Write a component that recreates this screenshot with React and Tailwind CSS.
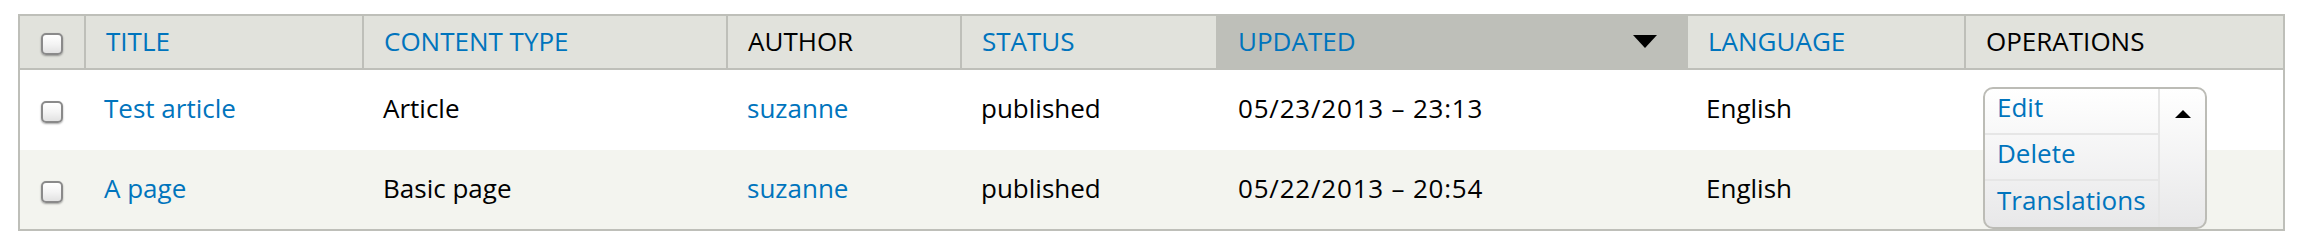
import React from 'react';

// Column widths (px) incl. the 2px left divider of each header cell
const cols = [
  { key: 'check', w: 'w-[64px]' },
  { key: 'title', w: 'w-[278px]', label: 'TITLE', link: true },
  { key: 'type', w: 'w-[364px]', label: 'CONTENT TYPE', link: true },
  { key: 'author', w: 'w-[234px]', label: 'AUTHOR' },
  { key: 'status', w: 'w-[256px]', label: 'STATUS', link: true },
  { key: 'updated', w: 'w-[470px]', label: 'UPDATED', link: true, active: true },
  { key: 'lang', w: 'w-[278px]', label: 'LANGUAGE', link: true },
  { key: 'ops', w: 'w-[319px]', label: 'OPERATIONS' },
];

const rows = [
  { title: 'Test article', type: 'Article', author: 'suzanne', status: 'published', updated: '05/23/2013 \u2013 23:13', lang: 'English', ops: true },
  { title: 'A page', type: 'Basic page', author: 'suzanne', status: 'published', updated: '05/22/2013 \u2013 20:54', lang: 'English' },
];

const Checkbox = () => (
  <span className="mt-[4px] block w-[22px] h-[22px] rounded-[5px] border-2 border-[#8a8a8a] bg-gradient-to-b from-white via-[#f4f4f4] to-[#e2e2e2] shadow-[0_1px_2px_rgba(0,0,0,0.35)]" />
);

const DropButton = () => (
  <div className="absolute left-[19px] top-[17px] w-[224px] flex rounded-[10px] border-2 border-[#bcbcb6] bg-gradient-to-b from-white to-[#e8e8e9] overflow-hidden z-10">
    <ul className="w-[173px] flex flex-col">
      <li className="h-[46px] flex items-center pl-[12px] pb-[7px] border-b-2 border-[#e6e6e6]">
        <a className="text-[#0074bd]">Edit</a>
      </li>
      <li className="h-[46px] flex items-center pl-[12px] pb-[7px] border-b-2 border-[#e6e6e6]">
        <a className="text-[#0074bd]">Delete</a>
      </li>
      <li className="h-[46px] flex items-center pl-[12px] pb-[7px]">
        <a className="text-[#0074bd]">Translations</a>
      </li>
    </ul>
    <div className="flex-1 border-l-2 border-[#e6e6e6] flex justify-center pt-[21px]">
      <svg width="16" height="8" viewBox="0 0 16 8">
        <polygon points="0,8 16,8 8,0" fill="#000" />
      </svg>
    </div>
  </div>
);

export default function App() {
  return (
    <div className="bg-white w-[2308px] h-[246px] pt-[14px] pl-[18px] text-[26px] text-black" style={{ fontFamily: '"Open Sans", "Noto Sans", sans-serif' }}>
      <div className="w-[2267px] border-2 border-[#bebfb9]">
        {/* header */}
        <div className="flex h-[54px] bg-[#e1e2dc] border-b-2 border-[#bebfb9]">
          {cols.map((c, i) => (
            <div
              key={c.key}
              className={`${c.w} flex items-center ${i === 0 ? 'justify-center' : 'border-l-2 pl-[20px] pb-[2px]'} ${
                c.active ? 'bg-[#bebfb9] border-[#bebfb9] pr-[29px] justify-between' : 'border-[#bebfb9]'
              }`}
            >
              {i === 0 ? (
                <Checkbox />
              ) : (
                <span className={c.link ? 'text-[#0074bd]' : 'text-black'}>{c.label}</span>
              )}
              {c.active && (
                <svg width="24" height="13" viewBox="0 0 24 13">
                  <polygon points="0,0 24,0 12,13" fill="#000" />
                </svg>
              )}
            </div>
          ))}
        </div>
        {/* rows */}
        {rows.map((r, ri) => (
          <div key={ri} className={`flex ${ri === 0 ? 'h-[80px] bg-white' : 'h-[79px] bg-[#f3f4ef]'}`}>
            <div className="w-[64px] flex items-center justify-center">
              <Checkbox />
            </div>
            <div className="w-[278px] flex items-center pl-[20px] pb-[3px]">
              <a className="text-[#0074bd]">{r.title}</a>
            </div>
            <div className="w-[364px] flex items-center pl-[21px] pb-[3px]">{r.type}</div>
            <div className="w-[234px] flex items-center pl-[21px] pb-[3px]">
              <a className="text-[#0074bd]">{r.author}</a>
            </div>
            <div className="w-[256px] flex items-center pl-[21px] pb-[3px]">{r.status}</div>
            <div className="w-[470px] flex items-center pl-[22px] pb-[3px] tracking-[0.8px]">{r.updated}</div>
            <div className="w-[278px] flex items-center pl-[20px] pb-[3px]">{r.lang}</div>
            <div className="w-[319px] relative">{r.ops && <DropButton />}</div>
          </div>
        ))}
      </div>
    </div>
  );
}
